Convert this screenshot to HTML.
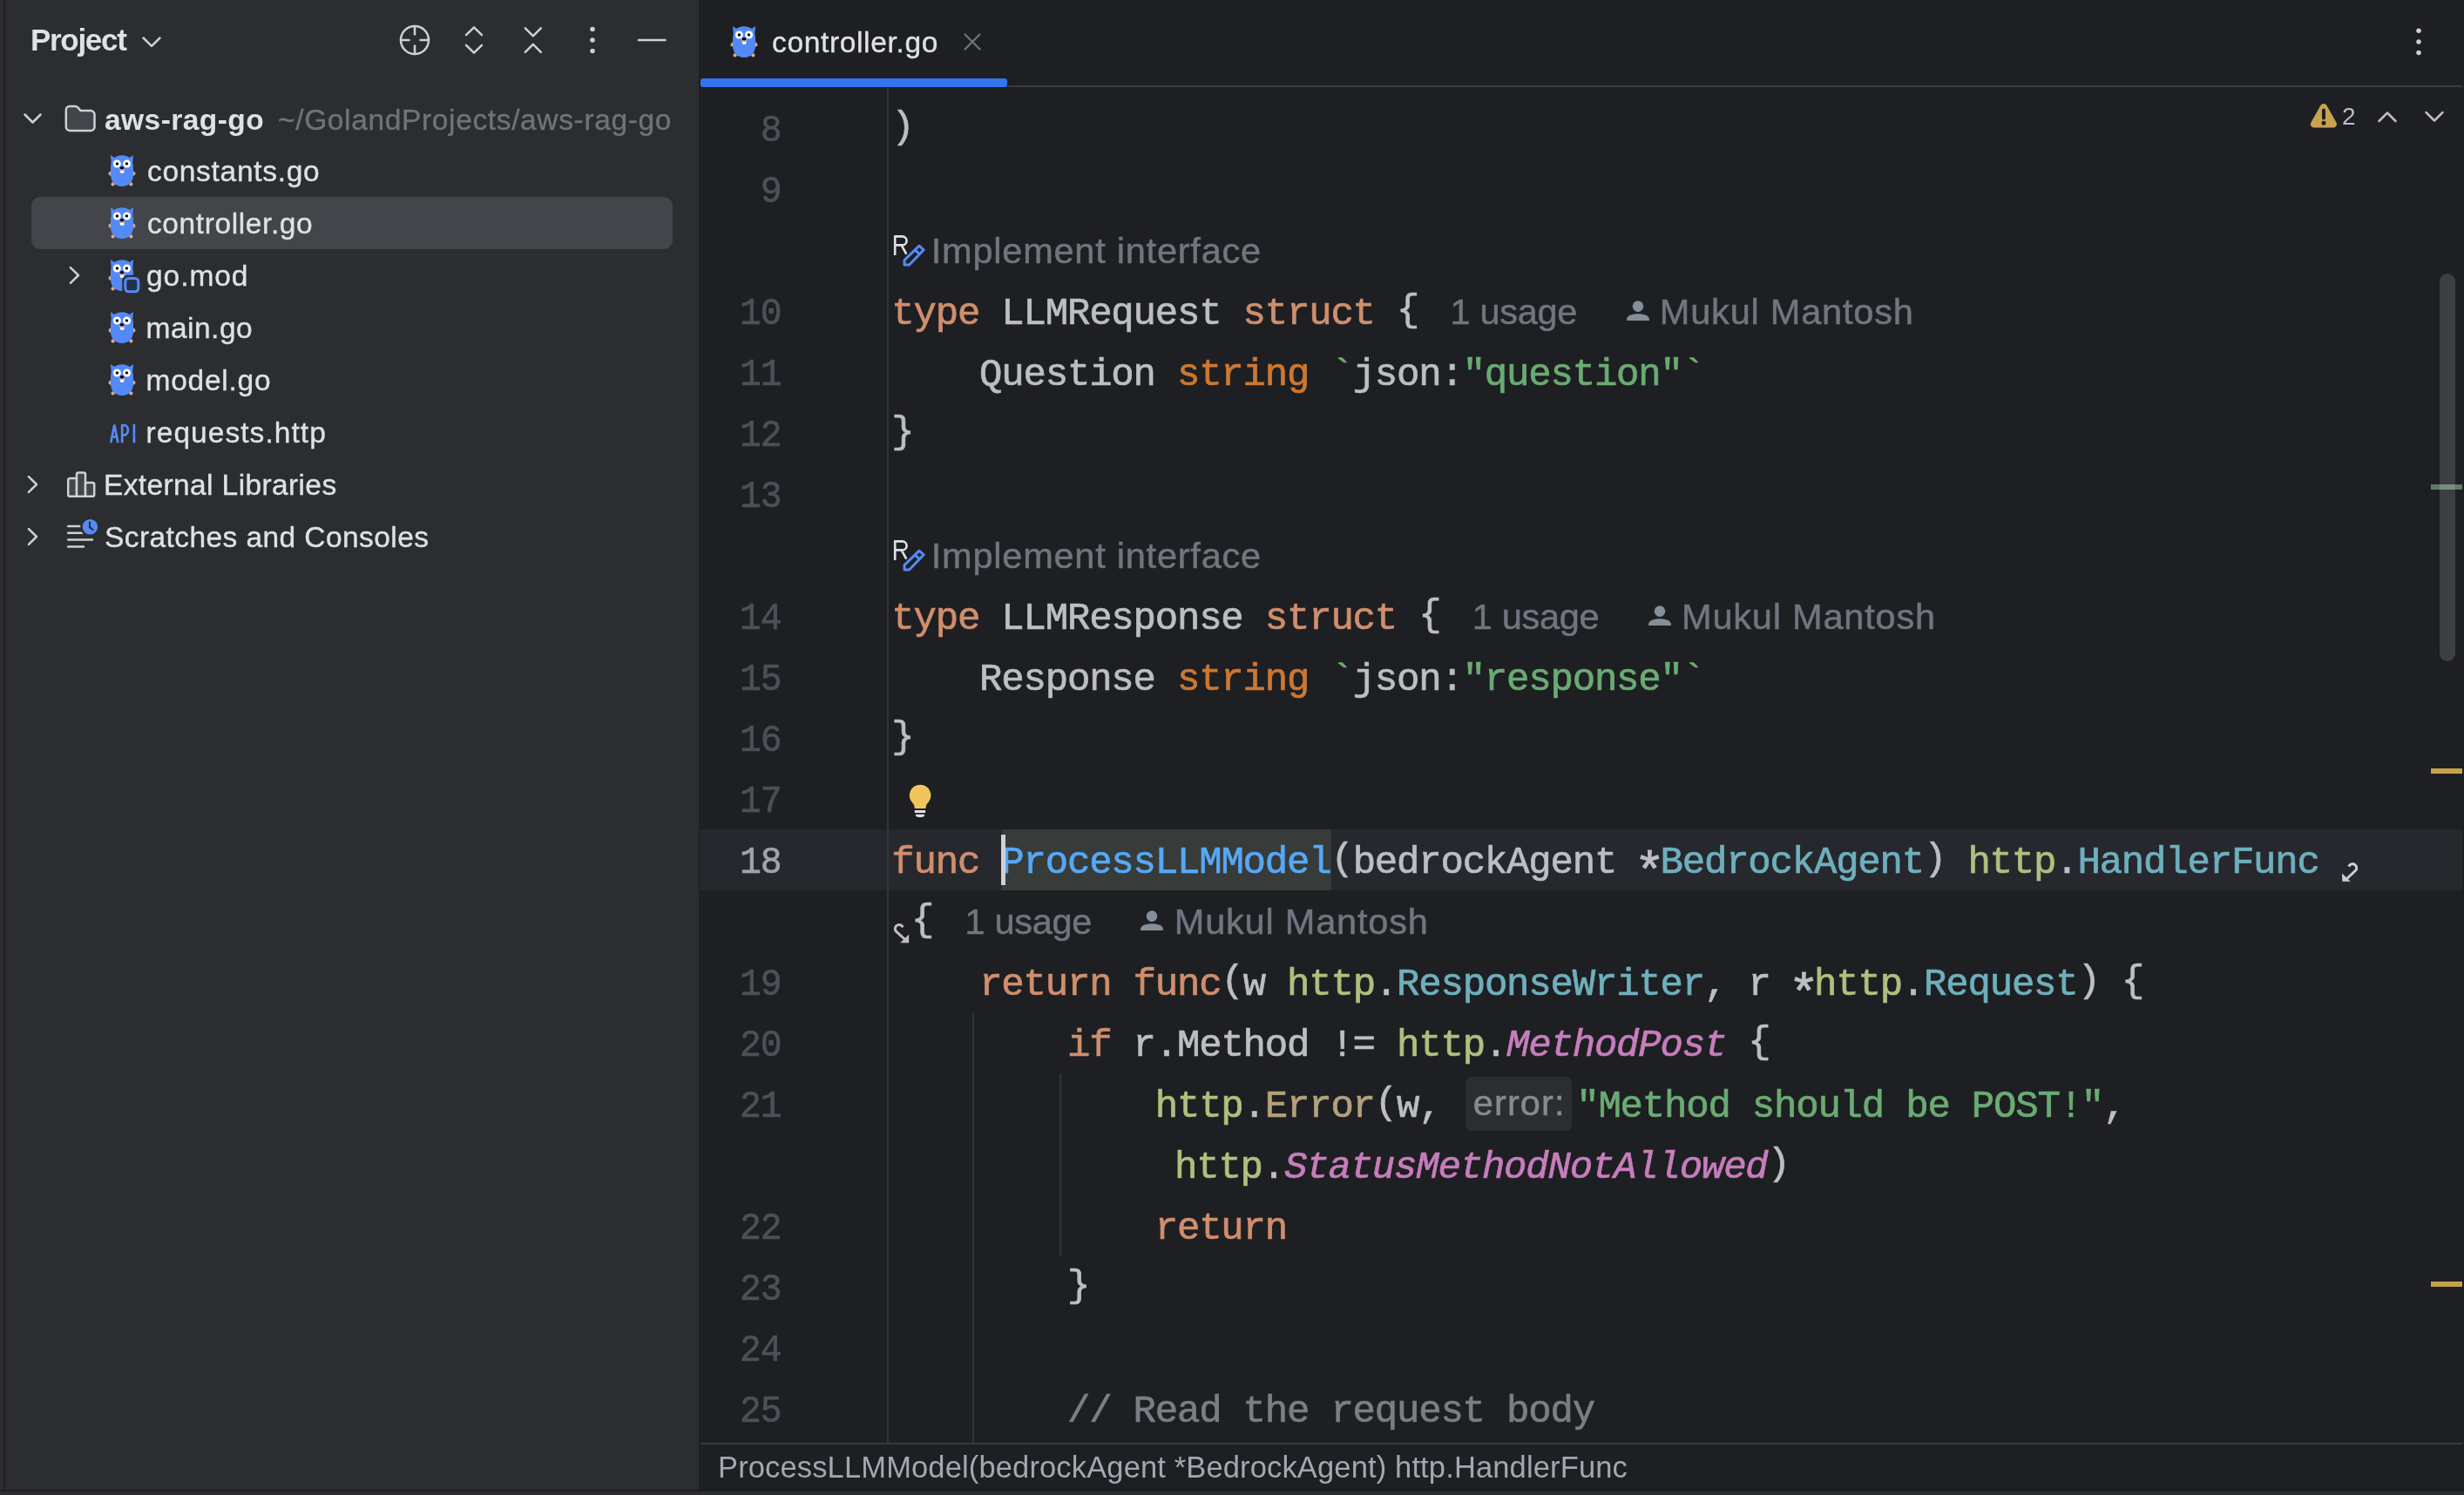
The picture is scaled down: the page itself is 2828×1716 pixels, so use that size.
<!DOCTYPE html>
<html>
<head>
<meta charset="utf-8">
<title>controller.go</title>
<style>
*{box-sizing:border-box;margin:0;padding:0}
html,body{width:2828px;height:1716px;overflow:hidden;background:#1E1F22}
body{position:relative;-webkit-font-smoothing:antialiased;font-family:"Liberation Sans",sans-serif;color:#DFE1E5}
#root{position:absolute;left:0;top:0;width:2828px;height:1716px;will-change:transform}
.abs{position:absolute}
svg{position:absolute;overflow:visible}
/* ---------- project panel ---------- */
#panel{position:absolute;left:0;top:0;width:802px;height:1710px;background:#2B2D30}
#lstripe{position:absolute;left:4px;top:0;width:2px;height:1710px;background:#1E1F22}
.ui{-webkit-text-stroke:.35px currentColor;position:absolute;white-space:pre;font-size:33.5px;line-height:40px;color:#DFE1E5}
.dim{color:#6F737A}
#sel{position:absolute;left:36px;top:226px;width:736px;height:60px;border-radius:10px;background:#43454A}
/* ---------- editor ---------- */
#tabline{position:absolute;left:1156px;top:98px;width:1670px;height:2px;background:#393B40}
#tabul{position:absolute;left:804px;top:90px;width:352px;height:10px;border-radius:3px;background:#3574F0}
#gline{position:absolute;left:1018px;top:100px;width:2px;height:1556px;background:#313438}
#curline{position:absolute;left:803px;top:952px;width:2023px;height:70px;background:#26282E}
#idhl{position:absolute;left:1150px;top:952px;width:378px;height:70px;background:#373B39}
#caret{position:absolute;left:1149px;top:958px;width:5px;height:58px;background:#CED0D6}
.ln{position:absolute;left:798px;width:98.4px;text-align:right;transform:scaleX(.94);transform-origin:100% 50%;-webkit-text-stroke:.7px currentColor;font-family:"Liberation Mono",monospace;font-size:44px;letter-spacing:-1.2px;line-height:70px;color:#4B5059;white-space:pre}
.cl{position:absolute;left:1023.3px;-webkit-text-stroke:.7px currentColor;font-family:"Liberation Mono",monospace;font-size:44px;letter-spacing:-1.2px;line-height:70px;color:#BCBEC4;white-space:pre;height:70px}
.cl i{font-style:normal;position:relative;top:-4px}
.cl b{font-weight:normal;display:inline-block;transform:translateY(13px) scale(1.35)}
.k{color:#CF8E6D}.t{color:#CC7832}.s{color:#6AAB73}.f{color:#56A8F5}.y{color:#6FAFBD}.p{color:#AFBF7E}
.c{color:#C77DBB;font-style:italic}.e{color:#B3A17B}.m{color:#7A7E85}
.cv{-webkit-text-stroke:.5px currentColor;font-family:"Liberation Sans",sans-serif;font-size:41.5px;letter-spacing:0;color:#71757F;display:inline-block;line-height:70px;vertical-align:top;position:relative;top:-2px}
.guide{position:absolute;width:2px;background:#313438}
#bcline{position:absolute;left:804px;top:1656px;width:2022px;height:2px;background:#393B40}
#bottom{position:absolute;left:0;top:1712px;width:2828px;height:4px;background:#2B2D30}
</style>
</head>
<body>
<div id="root">
<div id="panel"></div><div id="lstripe"></div>

<!-- header -->
<div class="ui" id="hproj" style="left:35px;top:25.5px;font-size:35px;font-weight:bold;letter-spacing:-1.3px;-webkit-text-stroke:0">Project</div>
<svg style="left:160px;top:36px" width="28" height="24" viewBox="0 0 28 24"><path d="M4.5 7.5 L14 16.8 L23.5 7.5" fill="none" stroke="#CED0D6" stroke-width="2.5" stroke-linecap="round" stroke-linejoin="round"/></svg>

<svg id="hicons" style="left:440px;top:20px" width="340" height="52" viewBox="440 20 340 52" fill="none" stroke="#CED0D6" stroke-width="2.5" stroke-linecap="round" stroke-linejoin="round">
 <circle cx="476" cy="46" r="16"/>
 <path d="M476 30 V39.5 M476 52.5 V62 M460 46 H469.5 M482.5 46 H492"/>
 <path d="M535 40.2 L544 31.3 L553 40.2 M535 51.8 L544 60.7 L553 51.8"/>
 <path d="M602.8 32.4 L611.8 41.3 L620.8 32.4 M602.8 59.8 L611.8 50.9 L620.8 59.8"/>
 <g fill="#CED0D6" stroke="none"><circle cx="680" cy="33.5" r="2.75"/><circle cx="680" cy="46" r="2.75"/><circle cx="680" cy="58.5" r="2.75"/></g>
 <path d="M733 46 H763.5"/>
</svg>

<!-- tree -->
<div id="sel"></div>
<svg style="left:24px;top:124px" width="28" height="24" viewBox="0 0 28 24"><path d="M4.5 7.5 L13.5 16.5 L22.5 7.5" fill="none" stroke="#CED0D6" stroke-width="2.5" stroke-linecap="round" stroke-linejoin="round"/></svg>
<svg style="left:73px;top:120px" width="38" height="32" viewBox="0 0 38 32"><path d="M2.8 6 a4 4 0 0 1 4 -4 h6.5 a4 4 0 0 1 3 1.3 l3.2 3.7 h11.5 a4.5 4.5 0 0 1 4.5 4.5 v14 a4.5 4.5 0 0 1 -4.5 4.5 h-23.7 a4.5 4.5 0 0 1 -4.5 -4.5 z" fill="#43454A" stroke="#CED0D6" stroke-width="2.5" stroke-linejoin="round"/></svg>
<div class="ui" style="left:120px;top:117.5px;font-weight:bold;letter-spacing:0.45px;-webkit-text-stroke:0">aws-rag-go</div>
<div class="ui dim" style="left:319px;top:117.5px;letter-spacing:0.64px">~/GolandProjects/aws-rag-go</div>

<div class="ui" style="left:169px;top:177.0px;letter-spacing:0.7px">constants.go</div>
<div class="ui" style="left:169px;top:237.0px;letter-spacing:0.6px">controller.go</div>
<div class="ui" style="left:168px;top:297.0px;letter-spacing:0.95px">go.mod</div>
<div class="ui" style="left:167.5px;top:357.0px;letter-spacing:0.5px">main.go</div>
<div class="ui" style="left:167.5px;top:417.0px;letter-spacing:0.75px">model.go</div>
<div class="ui" style="left:167.5px;top:477.0px;letter-spacing:1.05px">requests.http</div>
<div class="ui" style="left:119px;top:537.0px;letter-spacing:0.38px">External Libraries</div>
<div class="ui" style="left:120px;top:597.0px;letter-spacing:0.42px">Scratches and Consoles</div>

<!-- gopher symbol -->
<svg width="0" height="0" style="left:0;top:0"><defs>
<g id="gopher">
 <path d="M2.9 0.1 L9.4 4.6 L4 11 Z M29.1 0.1 L22.6 4.6 L28 11 Z" fill="#548AF7"/>
 <ellipse cx="3.4" cy="20.8" rx="3.1" ry="2.3" fill="#DDA98A" transform="rotate(-42 3.4 20.8)"/>
 <ellipse cx="28.6" cy="20.8" rx="3.1" ry="2.3" fill="#DDA98A" transform="rotate(42 28.6 20.8)"/>
 <circle cx="5.6" cy="33.4" r="2.1" fill="#DDA98A"/><circle cx="26.4" cy="33.4" r="2.1" fill="#DDA98A"/>
 <path d="M3 14.5 C3 5.5 8 0.3 16 0.3 C24 0.3 29 5.5 29 14.5 V22 C29 31 23.5 36 16 36 C8.5 36 3 31 3 22 Z" fill="#548AF7"/>
 <circle cx="10.3" cy="10" r="4.5" fill="#fff"/><circle cx="21.6" cy="10" r="4.5" fill="#fff"/>
 <circle cx="10.4" cy="10" r="1.7" fill="#000"/><circle cx="21.4" cy="9.9" r="1.7" fill="#000"/>
 <rect x="13.1" y="15.4" width="5.9" height="3" rx="1.4" fill="#DDA98A"/>
 <path d="M13.8 17.9 H18.4 V19.4 a1.4 1.4 0 0 1 -1.4 1.4 H15.2 a1.4 1.4 0 0 1 -1.4 -1.4 Z" fill="#fff"/>
 <ellipse cx="16" cy="14.7" rx="2.3" ry="1.8" fill="#000"/>
</g>
<g id="chevr"><path d="M2.9 2.2 L12 11 L2.9 19.9" fill="none" stroke="#CED0D6" stroke-width="2.5" stroke-linecap="round" stroke-linejoin="round"/></g>
<g id="person" fill="#858F9A"><circle cx="13" cy="6.6" r="6.3"/><path d="M0 23.1 V21.6 C0 17.4 5.6 15.2 13 15.2 C20.4 15.2 26 17.4 26 21.6 V23.1 Z"/></g>
<g id="rpen" fill="none" stroke-linejoin="round">
 <path d="M1027.2 293 V271.4 H1035.6 A5 5 0 0 1 1035.6 281.4 H1027.2 M1034.6 281.4 L1040.3 291.6" stroke="#DFE1E5" stroke-width="2.6"/>
 <path d="M1055 282.2 L1060.2 286.8 L1043.6 304 H1038 V298.6 Z M1050.2 286.9 L1055.4 291.9" stroke="#548AF7" stroke-width="3"/>
</g>
</defs></svg>

<svg style="left:124px;top:178px" width="32" height="36" viewBox="0 0 32 36"><use href="#gopher"/></svg>
<svg style="left:124px;top:238px" width="32" height="36" viewBox="0 0 32 36"><use href="#gopher"/></svg>
<svg style="left:124px;top:298px" width="40" height="40" viewBox="0 0 40 40"><use href="#gopher"/><rect x="16.2" y="17.8" width="24" height="24" rx="6.5" fill="#2B2D30"/><rect x="19.8" y="21.4" width="15" height="15.3" rx="3.8" fill="#25324D" stroke="#548AF7" stroke-width="3"/></svg>
<svg style="left:124px;top:358px" width="32" height="36" viewBox="0 0 32 36"><use href="#gopher"/></svg>
<svg style="left:124px;top:418px" width="32" height="36" viewBox="0 0 32 36"><use href="#gopher"/></svg>
<svg style="left:124px;top:484px" width="36" height="28" viewBox="124 484 36 28" fill="none" stroke="#548AF7" stroke-width="2.7"><path d="M127.2 508.3 L131.3 487.6 L135.4 508.3 M128.6 501.3 H134 M140.2 508.3 V488.2 H142.8 a4.1 5.6 0 0 1 0 11.2 H140.2 M153.9 486.8 V508.3"/></svg>

<svg style="left:78px;top:305px" width="16" height="24" viewBox="0 0 16 24"><use href="#chevr"/></svg>
<svg style="left:30px;top:545px" width="16" height="24" viewBox="0 0 16 24"><use href="#chevr"/></svg>
<svg style="left:30px;top:605px" width="16" height="24" viewBox="0 0 16 24"><use href="#chevr"/></svg>

<!-- external libraries icon -->
<svg style="left:75px;top:540px" width="36" height="32" viewBox="0 0 36 32" fill="#43454A" stroke="#CED0D6" stroke-width="2.5" stroke-linejoin="round">
 <path d="M3.2 11 a2 2 0 0 1 2 -2 h7.8 v20.7 h-7.8 a2 2 0 0 1 -2 -2 z"/><path d="M13 4.5 a2 2 0 0 1 2 -2 h6 a2 2 0 0 1 2 2 v25.2 h-10 z"/><path d="M23 14 h8.2 a2 2 0 0 1 2 2 v11.7 a2 2 0 0 1 -2 2 h-8.2 z"/>
</svg>
<!-- scratches icon -->
<svg style="left:75px;top:594px" width="40" height="36" viewBox="0 0 40 36">
 <path d="M3.2 10 H19 M3.2 17.8 H24 M3.2 25.6 H31 M3.2 33.4 H21" fill="none" stroke="#CED0D6" stroke-width="2.5" stroke-linecap="round"/>
 <circle cx="28.4" cy="10.7" r="10" fill="#548AF7" stroke="#2B2D30" stroke-width="2.5"/>
 <path d="M28 5.5 V11.2 L31.5 14" fill="none" stroke="#2B2D30" stroke-width="2.2" stroke-linecap="round" stroke-linejoin="round"/>
</svg>

<!-- ---------- editor tab ---------- -->
<svg style="left:838px;top:30px" width="32" height="36" viewBox="0 0 32 36"><use href="#gopher"/></svg>
<div class="ui" style="left:886px;top:29px;letter-spacing:0.65px">controller.go</div>
<svg style="left:1104px;top:36px" width="24" height="24" viewBox="0 0 24 24"><path d="M3.5 3.5 L20.5 20.5 M20.5 3.5 L3.5 20.5" stroke="#6F737A" stroke-width="2.3" stroke-linecap="round"/></svg>
<div id="tabline"></div>
<div id="tabul"></div>
<svg style="left:2770px;top:28px" width="12" height="40" viewBox="0 0 12 40" fill="#CED0D6"><circle cx="6" cy="7.3" r="2.75"/><circle cx="6" cy="19.9" r="2.75"/><circle cx="6" cy="32.4" r="2.75"/></svg>

<!-- inspection widget -->
<svg style="left:2650px;top:117px" width="34" height="32" viewBox="0 0 34 32"><path d="M13.4 4 a4 4 0 0 1 7 0 l11 19.5 a4 4 0 0 1 -3.5 6 h-22 a4 4 0 0 1 -3.5 -6 z" fill="#C9A24D"/><path d="M17 9.5 V18.5" stroke="#1E1F22" stroke-width="4" stroke-linecap="round"/><circle cx="17" cy="24.3" r="2.5" fill="#1E1F22"/></svg>
<div class="abs" style="left:2688px;top:116px;font-size:28px;line-height:36px;color:#BCBEC4">2</div>
<svg style="left:2726px;top:122px" width="28" height="24" viewBox="0 0 28 24"><path d="M4.5 17 L14 7.5 L23.5 17" fill="none" stroke="#BCBEC4" stroke-width="2.5" stroke-linecap="round" stroke-linejoin="round"/></svg>
<svg style="left:2780px;top:122px" width="28" height="24" viewBox="0 0 28 24"><path d="M4.5 7 L14 16.5 L23.5 7" fill="none" stroke="#BCBEC4" stroke-width="2.5" stroke-linecap="round" stroke-linejoin="round"/></svg>

<!-- ---------- editor body ---------- -->
<div id="curline"></div>
<div id="idhl"></div>
<div id="gline"></div>
<div class="guide" style="left:1116px;top:1162px;height:494px"></div>
<div class="guide" style="left:1216px;top:1232px;height:210px"></div>

<!-- scrollbar + markers -->
<div class="abs" style="left:2790px;top:556px;width:36px;height:6px;background:#5E7B6A"></div>
<div class="abs" style="left:2790px;top:882px;width:36px;height:6px;background:#C6A14B"></div>
<div class="abs" style="left:2790px;top:1471px;width:36px;height:6px;background:#C6A14B"></div>
<div class="abs" style="left:2800px;top:314px;width:18px;height:445px;border-radius:9px;background:rgba(255,255,255,.145)"></div>

<div id="lines">
<div class="ln" style="top:115px">8</div>
<div class="ln" style="top:185px">9</div>
<div class="ln" style="top:325px">10</div>
<div class="ln" style="top:395px">11</div>
<div class="ln" style="top:465px">12</div>
<div class="ln" style="top:535px">13</div>
<div class="ln" style="top:675px">14</div>
<div class="ln" style="top:745px">15</div>
<div class="ln" style="top:815px">16</div>
<div class="ln" style="top:885px">17</div>
<div class="ln" style="top:955px;color:#A1A3AB">18</div>
<div class="ln" style="top:1095px">19</div>
<div class="ln" style="top:1165px">20</div>
<div class="ln" style="top:1235px">21</div>
<div class="ln" style="top:1375px">22</div>
<div class="ln" style="top:1445px">23</div>
<div class="ln" style="top:1515px">24</div>
<div class="ln" style="top:1585px">25</div>

<div class="cl" style="top:115px"><i>)</i></div>

<div class="cl" style="top:255px"><span class="cv" style="margin-left:45.5px;letter-spacing:.77px">Implement interface</span></div>
<div class="cl" style="top:325px"><span class="k">type</span> LLMRequest <span class="k">struct</span> <i>{</i><span class="cv" style="margin-left:36.3px;letter-spacing:-.3px">1 usage</span><span class="cv" style="margin-left:94.7px;letter-spacing:.8px">Mukul Mantosh</span></div>
<div class="cl" style="top:395px">    Question <span class="t">string</span> <span class="s">`</span>json:<span class="s">"question"`</span></div>
<div class="cl" style="top:465px"><i>}</i></div>

<div class="cl" style="top:605px"><span class="cv" style="margin-left:45.5px;letter-spacing:.77px">Implement interface</span></div>
<div class="cl" style="top:675px"><span class="k">type</span> LLMResponse <span class="k">struct</span> <i>{</i><span class="cv" style="margin-left:36.3px;letter-spacing:-.3px">1 usage</span><span class="cv" style="margin-left:94.7px;letter-spacing:.8px">Mukul Mantosh</span></div>
<div class="cl" style="top:745px">    Response <span class="t">string</span> <span class="s">`</span>json:<span class="s">"response"`</span></div>
<div class="cl" style="top:815px"><i>}</i></div>

<div class="cl" style="top:955px"><span class="k">func</span> <span class="f">ProcessLLMModel</span><i>(</i>bedrockAgent <b>*</b><span class="y">BedrockAgent</span><i>)</i> <span class="p">http</span>.<span class="y">HandlerFunc</span></div>
<div class="cl" style="top:1025px;left:1046px"><i>{</i><span class="cv" style="margin-left:36.3px;letter-spacing:-.3px">1 usage</span><span class="cv" style="margin-left:94.7px;letter-spacing:.8px">Mukul Mantosh</span></div>
<div class="cl" style="top:1095px">    <span class="k">return</span> <span class="k">func</span><i>(</i>w <span class="p">http</span>.<span class="y">ResponseWriter</span>, r <b>*</b><span class="p">http</span>.<span class="y">Request</span><i>)</i> <i>{</i></div>
<div class="cl" style="top:1165px">        <span class="k">if</span> r.Method != <span class="p">http</span>.<span class="c">MethodPost</span> <i>{</i></div>
<div class="cl" style="top:1235px">            <span class="p">http</span>.<span class="e">Error</span><i>(</i>w, <span class="cv" id="errh" style="margin:3px 5px 0 3.5px;width:122px;height:62px;line-height:60px;border-radius:7px;background:#2B2D31;color:#868A91;text-align:center;letter-spacing:1.1px;text-indent:1px">error:</span><span class="s">"Method should be POST!"</span>,</div>
<div class="cl" style="top:1305px;left:1348px"><span class="p">http</span>.<span class="c">StatusMethodNotAllowed</span><i>)</i></div>
<div class="cl" style="top:1375px">            <span class="k">return</span></div>
<div class="cl" style="top:1445px">        <i>}</i></div>
<div class="cl" style="top:1585px">        <span class="m">// Read the request body</span></div>
</div>

<div id="caret"></div>

<!-- code vision icons -->
<svg style="left:1020px;top:264px" width="48" height="48" viewBox="1020 264 48 48"><use href="#rpen"/></svg>
<svg style="left:1020px;top:614px" width="48" height="48" viewBox="1020 264 48 48"><use href="#rpen"/></svg>

<svg style="left:1867px;top:345px" width="26" height="24" viewBox="0 0 26 24"><use href="#person"/></svg>
<svg style="left:1892px;top:695px" width="26" height="24" viewBox="0 0 26 24"><use href="#person"/></svg>
<svg style="left:1309px;top:1045px" width="26" height="24" viewBox="0 0 26 24"><use href="#person"/></svg>

<!-- bulb -->
<svg style="left:1040px;top:900px" width="32" height="40" viewBox="0 0 32 40"><path d="M16.1 0.75 A12.2 12.2 0 0 1 25.8 20.4 L23.2 23.7 L22.4 28 H9.8 L9 23.7 L6.4 20.4 A12.2 12.2 0 0 1 16.1 0.75 Z" fill="#F2C55C"/><rect x="9.8" y="30" width="12.4" height="2.9" rx=".6" fill="#DFE1E5"/><path d="M10.8 34.8 H21.2 a4 3.2 0 0 1 -4 3.2 h-2.4 a4 3.2 0 0 1 -4 -3.2 Z" fill="#DFE1E5"/></svg>

<!-- soft-wrap arrows -->
<svg style="left:2684px;top:986px" width="26" height="30" viewBox="0 0 26 30"><path d="M11.8 8.6 A4.6 4.6 0 1 1 19.7 13.1 L8 24" fill="none" stroke="#CED0D6" stroke-width="3"/><path d="M4 16.5 L13.7 25.8 L4.4 25.8 Z" fill="#CED0D6"/></svg>
<svg style="left:1022px;top:1056px" width="26" height="30" viewBox="0 0 26 30"><path d="M14.2 8.4 A4.6 4.6 0 1 0 6.3 12.9 L18 23.5" fill="none" stroke="#BCBEC4" stroke-width="3"/><path d="M21.2 16.5 L21.2 26.2 L11.2 26.2 Z" fill="#BCBEC4"/></svg>

<!-- breadcrumbs -->
<div id="bcline"></div>
<div class="abs" id="bc" style="left:824px;top:1663.5px;font-size:34.5px;line-height:40px;letter-spacing:0.14px;color:#A3A7B2;white-space:pre">ProcessLLMModel(bedrockAgent *BedrockAgent) http.HandlerFunc</div>
<div id="bottom"></div>
</div>
</body>
</html>
